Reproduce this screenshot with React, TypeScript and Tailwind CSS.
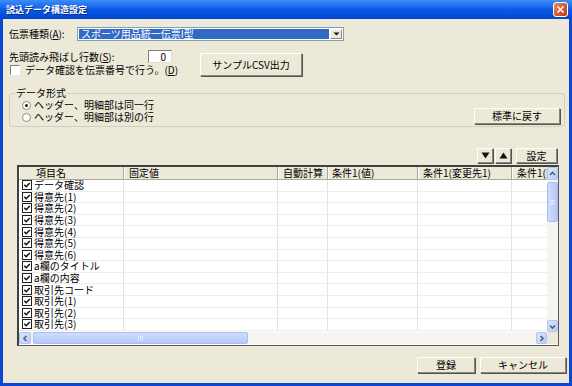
import React from 'react'

const rows = [
  'データ確認',
  '得意先(1)',
  '得意先(2)',
  '得意先(3)',
  '得意先(4)',
  '得意先(5)',
  '得意先(6)',
  'a欄のタイトル',
  'a欄の内容',
  '取引先コード',
  '取引先(1)',
  '取引先(2)',
  '取引先(3)',
]

const columns = [
  { label: '項目名', width: 'w-[105px]', pad: 'pl-[16px]' },
  { label: '固定値', width: 'w-[154px]', pad: 'pl-[4px]' },
  { label: '自動計算', width: 'w-[50px]', pad: 'pl-[4px]' },
  { label: '条件1(値)', width: 'w-[90px]', pad: 'pl-[3px]' },
  { label: '条件1(変更先1)', width: 'w-[94px]', pad: 'pl-[4px]' },
  { label: '条件1(変更先2)', width: 'w-[94px]', pad: 'pl-[4px]' },
]

// classic 3d button
function Button({ className, children }: { className: string; children: React.ReactNode }) {
  return (
    <div
      className={
        'flex items-center justify-center shrink-0 bg-[#ECE9D8] border border-t-white border-l-white border-r-[#8A887C] border-b-[#8A887C] shadow-[1px_1px_0_#55544c] text-[10px] leading-none ' +
        className
      }
    >
      {children}
    </div>
  )
}

function Arrow({ dir }: { dir: 'up' | 'down' | 'left' | 'right' }) {
  const d = {
    up: 'M2 6 L4.5 3.5 L7 6',
    down: 'M2 3.5 L4.5 6 L7 3.5',
    left: 'M5.5 2 L3 4.5 L5.5 7',
    right: 'M3.5 2 L6 4.5 L3.5 7',
  }[dir]
  return (
    <svg width="9" height="9" viewBox="0 0 9 9">
      <path d={d} fill="none" stroke="#4D6185" strokeWidth="1.6" />
    </svg>
  )
}

function ScrollBtn({ dir, className }: { dir: 'up' | 'down' | 'left' | 'right'; className: string }) {
  return (
    <div
      className={
        'flex items-center justify-center shrink-0 rounded-[2px] border border-[#B1C4F2] bg-linear-to-br from-[#DCE6FD] to-[#BACDF8] ' +
        className
      }
    >
      <Arrow dir={dir} />
    </div>
  )
}

function Check({ className }: { className: string }) {
  return (
    <div className={'flex items-center justify-center shrink-0 bg-white border border-[#222] ' + className}>
      <svg width="8" height="8" viewBox="0 0 8 8">
        <path d="M1.3 3.8 L3.2 5.7 L6.8 1.9" fill="none" stroke="#111" strokeWidth="1.5" />
      </svg>
    </div>
  )
}

export default function App() {
  return (
    <div className="w-[572px] h-[386px] flex flex-col bg-[#0C47D4] font-['Noto_Sans_CJK_JP','Noto_Sans',sans-serif] text-black overflow-hidden">
      {/* title bar */}
      <div className="h-[19px] shrink-0 flex items-center justify-between pl-[6px] pr-[4px] bg-linear-to-b from-[#3D8DF8] via-[#0A5AE8] to-[#0047D0]">
        <span className="text-[9px] font-bold text-white leading-none [text-shadow:1px_1px_0_#0A2A80]">
          読込データ構造設定
        </span>
        <div className="w-[15px] h-[15px] rounded-[3px] border border-white flex items-center justify-center bg-linear-to-br from-[#EE8C68] via-[#DD5A2E] to-[#C23A14]">
          <svg width="9" height="9" viewBox="0 0 9 9">
            <path d="M1.5 1.5 L7.5 7.5 M7.5 1.5 L1.5 7.5" stroke="white" strokeWidth="1.7" />
          </svg>
        </div>
      </div>

      <div className="flex-1 flex px-[3px] pb-[3px]">
        <div className="flex-1 flex flex-col bg-[#ECE9D8] text-[10px] leading-none">
          {/* slip type */}
          <div className="flex items-center mt-[8px] pl-[6px] h-[14px]">
            <span className="w-[68px] whitespace-pre">
              伝票種類(<span className="underline">A</span>):{' '}
            </span>
            <div className="w-[267px] h-[14px] flex items-stretch bg-white border border-[#7F9DB9] p-px">
              <div className="flex-1 flex items-center pl-[2px] bg-[#316AC5] text-white">
                スポーツ用品統一伝票I型
              </div>
              <div className="w-[12px] ml-px flex items-center justify-center bg-[#ECE9D8] border border-t-white border-l-white border-r-[#8A887C] border-b-[#8A887C]">
                <svg width="7" height="4" viewBox="0 0 7 4">
                  <path d="M0.5 0.5 L6.5 0.5 L3.5 3.5 Z" fill="#111" />
                </svg>
              </div>
            </div>
          </div>

          {/* skip rows + csv */}
          <div className="flex mt-[9px] pl-[6px]">
            <div className="w-[191px] flex flex-col">
              <div className="h-[13px] flex items-center">
                <span className="w-[139px]">
                  先頭読み飛ばし行数(<span className="underline">S</span>):
                </span>
                <div className="w-[24px] h-[13px] bg-white border border-t-[#808080] border-l-[#808080] border-r-[#E0DFD6] border-b-[#E0DFD6] flex items-center justify-end pr-[5px]">
                  0
                </div>
              </div>
              <div className="h-[13px] flex items-center">
                <div className="ml-[1px] w-[10px] h-[10px] bg-white border border-t-[#808080] border-l-[#808080] border-r-white border-b-white" />
                <span className="ml-[5px]">
                  データ確認を伝票番号で行う。(<span className="underline">D</span>)
                </span>
              </div>
            </div>
            <Button className="mt-[3px] w-[102px] h-[23px]">サンプルCSV出力</Button>
          </div>

          {/* data format group */}
          <div className="relative mt-[17px] ml-[6px] w-[556px] h-[34px] border border-[#D0D0BF] rounded-[3px] flex justify-between items-end">
            <span className="absolute left-[5px] top-[-6px] px-[1px] bg-[#ECE9D8]">データ形式</span>
            <div className="self-start pt-[5px] pl-[12px] flex flex-col">
              <div className="h-[12px] flex items-center">
                <div className="w-[9px] h-[9px] rounded-full bg-white border border-[#8C8B80] flex items-center justify-center">
                  <div className="w-[3px] h-[3px] rounded-full bg-[#111]" />
                </div>
                <span className="ml-[3px]">ヘッダー、明細部は同一行</span>
              </div>
              <div className="h-[12px] flex items-center">
                <div className="w-[9px] h-[9px] rounded-full bg-white border border-[#8C8B80]" />
                <span className="ml-[3px]">ヘッダー、明細部は別の行</span>
              </div>
            </div>
            <Button className="w-[86px] h-[16px] mr-[4px] mb-[2px]">標準に戻す</Button>
          </div>

          {/* toolbar */}
          <div className="flex justify-end items-center mt-[21px] pr-[12px]">
            <Button className="w-[16px] h-[15px]">
              <svg width="9" height="7" viewBox="0 0 9 7">
                <path d="M0.5 0.5 L8.5 0.5 L4.5 6.5 Z" fill="#111" />
              </svg>
            </Button>
            <Button className="ml-[2px] w-[16px] h-[15px]">
              <svg width="9" height="7" viewBox="0 0 9 7">
                <path d="M0.5 6.5 L8.5 6.5 L4.5 0.5 Z" fill="#111" />
              </svg>
            </Button>
            <Button className="ml-[5px] w-[41px] h-[15px]">設定</Button>
          </div>

          {/* grid */}
          <div className="mt-[2px] ml-[14px] w-[542px] h-[181px] flex flex-col bg-white border-t-2 border-l-2 border-r border-b border-t-[#404040] border-l-[#404040] border-r-[#5a5a5a] border-b-[#5a5a5a]">
            <div className="h-[165px] flex">
              <div className="w-[528px] flex flex-col overflow-hidden">
                <div className="h-[13px] shrink-0 flex bg-[#ECE9D8] border-b border-[#ACA899]">
                  {columns.map((c) => (
                    <div
                      key={c.label}
                      className={`${c.width} ${c.pad} shrink-0 flex items-center whitespace-nowrap border-r border-r-[#ACA899] border-l border-l-white`}
                    >
                      {c.label}
                    </div>
                  ))}
                </div>
                {rows.map((r) => (
                  <div key={r} className="h-[11.6px] shrink-0 flex border-b border-[#EDEDED]">
                    {columns.map((c, i) => (
                      <div
                        key={c.label}
                        className={`${c.width} shrink-0 flex items-center border-r border-[#E4E4E4]`}
                      >
                        {i === 0 && (
                          <>
                            <Check className="ml-[3px] w-[10px] h-[10px]" />
                            <span className="ml-[2px] whitespace-nowrap">{r}</span>
                          </>
                        )}
                      </div>
                    ))}
                  </div>
                ))}
              </div>
              {/* vertical scroll */}
              <div className="w-[11px] flex flex-col bg-[#F5F4EE]">
                <ScrollBtn dir="up" className="h-[13px]" />
                <div className="mt-[2px] h-[40px] rounded-[2px] border border-[#A9BDEE] bg-linear-to-r from-[#CFDCFD] to-[#B5C9F7] flex flex-col items-center justify-center gap-[1px]">
                  <div className="w-[5px] h-px bg-[#E6EEFE]" />
                  <div className="w-[5px] h-px bg-[#E6EEFE]" />
                  <div className="w-[5px] h-px bg-[#E6EEFE]" />
                </div>
                <div className="flex-1" />
                <ScrollBtn dir="down" className="h-[12px]" />
              </div>
            </div>
            {/* horizontal scroll */}
            <div className="h-[12px] flex">
              <div className="w-[528px] flex bg-[#F5F4EE]">
                <ScrollBtn dir="left" className="w-[12px]" />
                <div className="ml-[2px] w-[215px] rounded-[2px] border border-[#A9BDEE] bg-linear-to-b from-[#CFDCFD] to-[#B5C9F7] flex items-center justify-center gap-[1px]">
                  <div className="w-px h-[5px] bg-[#E6EEFE]" />
                  <div className="w-px h-[5px] bg-[#E6EEFE]" />
                  <div className="w-px h-[5px] bg-[#E6EEFE]" />
                </div>
                <div className="flex-1" />
                <ScrollBtn dir="right" className="w-[11px]" />
              </div>
              <div className="flex-1 bg-[#ECE9D8]" />
            </div>
          </div>

          {/* bottom buttons */}
          <div className="flex justify-end mt-[11px] pr-[3px] gap-[5px]">
            <Button className="w-[58px] h-[16px]">登録</Button>
            <Button className="w-[86px] h-[16px]">キャンセル</Button>
          </div>
        </div>
      </div>
    </div>
  )
}
